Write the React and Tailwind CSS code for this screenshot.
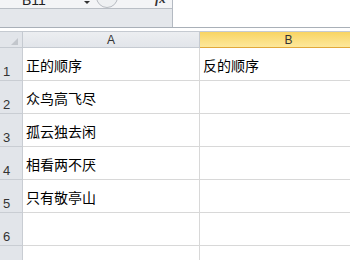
import React from "react";

const rows = [
  ["正的顺序", "反的顺序"],
  ["众鸟高飞尽", ""],
  ["孤云独去闲", ""],
  ["相看两不厌", ""],
  ["只有敬亭山", ""],
  ["", ""],
  ["", ""],
];

export default function App() {
  const cjk = { fontFamily: '"Noto Sans CJK SC", "Noto Sans", sans-serif' };
  return (
    <div className="w-[350px] h-[260px] overflow-hidden bg-white flex flex-col" style={{ fontFamily: '"Liberation Sans", Arial, sans-serif' }}>
      {/* formula bar */}
      <div className="h-[28px] flex shrink-0 border-b border-[#a9b0b8]">
        <div className="w-[173px] flex flex-col border-r border-[#b4bac2]">
          <div className="h-[9px] flex items-end bg-[#f3f4f6] border-b border-[#b9bec5] relative overflow-hidden">
            <div className="absolute left-[22px] top-[-7px] text-[14px] leading-[14px] text-[#222]">B11</div>
            <svg className="absolute left-[84px] top-[1px]" width="6" height="4" viewBox="0 0 6 4"><path d="M0 0h6L3 3z" fill="#333" /></svg>
            <div className="absolute left-[96px] top-[-14px] w-[22px] h-[22px] rounded-full border border-[#b8bcc2] bg-[#eef0f2]" />
            <div className="absolute left-[155px] top-[-8px] text-[13px] leading-[14px] italic font-bold text-[#333]" style={{ fontFamily: '"Liberation Serif", serif' }}>fx</div>
          </div>
          <div className="flex-1 bg-[#e4e7eb]" />
        </div>
        <div className="flex-1 bg-white" />
      </div>
      <div className="h-[3px] shrink-0 bg-white" />
      {/* column headers */}
      <div className="h-[17px] flex shrink-0 border-t border-[#c5cad1]">
        <div className="w-[23px] shrink-0 relative bg-[#e2e5ea] border-r border-[#c5cad1] border-b border-[#b9bec6]">
          <svg className="absolute left-[11px] top-[6px]" width="7" height="7" viewBox="0 0 7 7"><path d="M7 0V7H0z" fill="#c2c6cc" /></svg>
        </div>
        <div className="w-[177px] shrink-0 flex items-center justify-center text-[12px] text-[#333] bg-gradient-to-b from-[#eceef1] to-[#e2e5ea] border-r border-[#c5cad1] border-b border-[#b9bec6]">A</div>
        <div className="w-[177px] shrink-0 flex items-center justify-center text-[12px] text-[#333] bg-gradient-to-b from-[#f8d462] to-[#fde89a] border-b border-[#e2a83a]">B</div>
      </div>
      {rows.map((r, i) => (
        <div key={i} className="h-[33px] flex shrink-0">
          <div className="w-[23px] shrink-0 bg-[#e2e5ea] border-r border-[#b9bec6] border-b border-[#c9cdd3] flex items-end pl-[3px] pb-[1px] text-[13px] leading-[15px] text-[#333]">{i + 1}</div>
          <div className="w-[177px] shrink-0 border-r border-b border-[#d8d8d8] flex items-center pl-[3px] pt-[2px] text-[14px] text-black" style={cjk}>{r[0]}</div>
          <div className="w-[177px] shrink-0 border-b border-[#d8d8d8] flex items-center pl-[3px] pt-[2px] text-[14px] text-black" style={cjk}>{r[1]}</div>
        </div>
      ))}
    </div>
  );
}
